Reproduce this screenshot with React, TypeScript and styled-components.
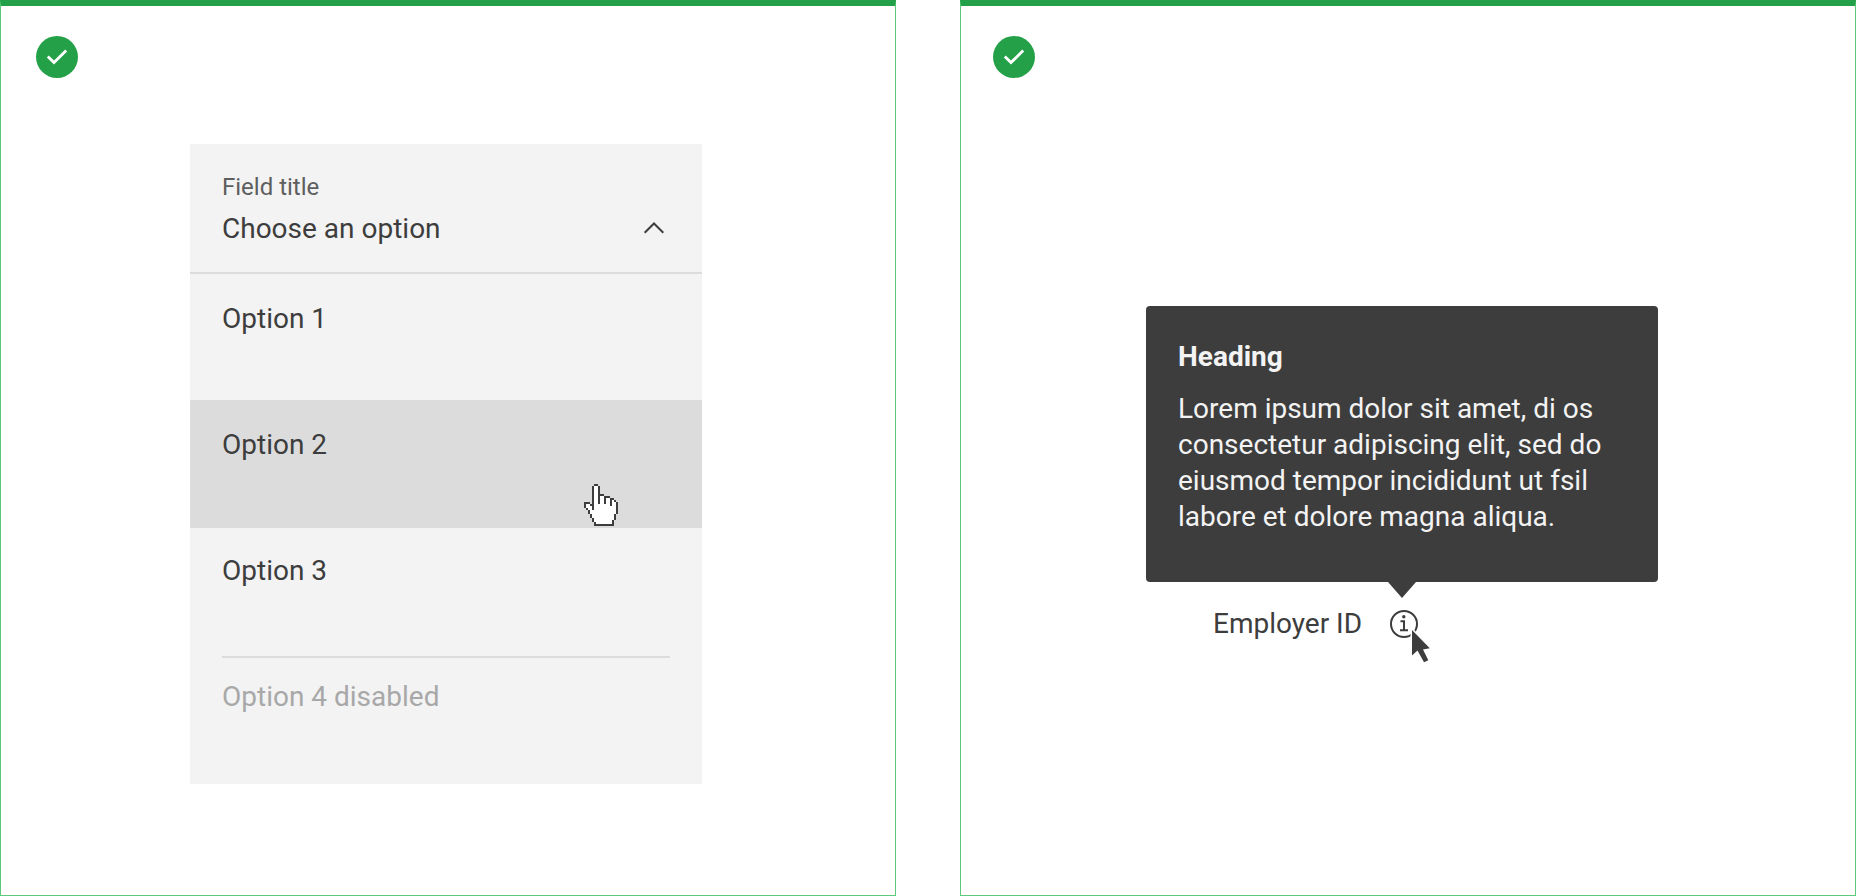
import React from 'react';
import styled, { createGlobalStyle, css } from 'styled-components';

const ink = '#3d3d3d';
const green = '#24a148';

const GlobalStyle = createGlobalStyle`
  *, *::before, *::after { box-sizing: border-box; }
  body { margin: 0; background: #fff; color: ${ink}; }
  body, button { font-family: Roboto, 'Liberation Sans', sans-serif; font-size: 28px; line-height: 36px; }
`;

const Page = styled.main`
  display: grid;
  grid-template-columns: 1fr 1fr;
  gap: 64px;
  min-height: 100vh;
`;

const Panel = styled.section<{ $inset: number }>`
  display: flex;
  flex-direction: column;
  padding: 30px ${(p) => p.$inset}px 111px;
  border: 1px solid #5bcb7b;
  border-top: 6px solid ${green};
`;

const Badge = styled.svg`
  display: block;
  width: 42px;
  height: 42px;
`;

const Example = styled.div<{ $top: number; $shift: number }>`
  display: flex;
  flex-direction: column;
  align-items: center;
  margin-top: ${(p) => p.$top}px;
  padding-right: ${(p) => p.$shift}px;
`;

const Dropdown = styled.div`
  width: 100%;
  max-width: 512px;
  background: #f3f3f3;
`;

const Trigger = styled.button`
  display: flex;
  align-items: flex-end;
  justify-content: space-between;
  width: 100%;
  height: 130px;
  padding: 0 36px 25px 32px;
  border: 0;
  border-bottom: 2px solid #dcdcdc;
  background: none;
  color: inherit;
  text-align: left;
`;

const TriggerText = styled.span`
  display: flex;
  flex-direction: column;
  gap: 8px;
`;

const FieldTitle = styled.span`
  color: #5e5e5e;
  font-size: 24px;
  line-height: 32px;
`;

const Chevron = styled.svg`
  width: 24px;
  height: 24px;
  margin-bottom: 7px;
`;

const Options = styled.ul`
  margin: 0;
  padding: 0 0 6px;
  list-style: none;
`;

const Option = styled.li<{ $hovered?: boolean; $disabled?: boolean }>`
  position: relative;
  height: 126px;
  padding: 27px 32px 0;
  ${(p) => p.$hovered && css`
    background: #dcdcdc;
    box-shadow: 0 2px 0 #dcdcdc;
  `}
  ${(p) => p.$disabled && css`
    padding-top: 4px;
    color: #a8a8a8;
  `}
`;

const OptionLabel = styled.span<{ $divided?: boolean }>`
  display: block;
  ${(p) => p.$divided && css`
    padding-top: 21px;
    border-top: 2px solid #dcdcdc;
  `}
`;

const HandPointer = styled.svg`
  position: absolute;
  right: 84px;
  bottom: 0;
  width: 34px;
  height: 42px;
`;

const Tooltip = styled.div`
  position: relative;
  width: 100%;
  max-width: 512px;
  padding: 33px 32px 47px;
  border-radius: 4px;
  background: ${ink};
  color: #f3f3f3;

  &::after {
    content: '';
    position: absolute;
    top: 100%;
    left: 50%;
    margin-left: -14px;
    border: 14px solid transparent;
    border-top: 16px solid ${ink};
    border-bottom: 0;
  }
`;

const Heading = styled.h2`
  margin: 0 0 16px;
  font-size: 28px;
  line-height: 36px;
  font-weight: 700;
`;

const Body = styled.p`
  margin: 0;
`;

const Field = styled.div`
  display: flex;
  align-items: center;
  gap: 28px;
  width: 100%;
  max-width: 512px;
  margin-top: 24px;
  padding-left: 67px;
`;

const InfoButton = styled.button`
  position: relative;
  display: block;
  width: 28px;
  height: 28px;
  padding: 0;
  border: 0;
  background: none;
`;

const InfoIcon = styled.svg`
  display: block;
  width: 28px;
  height: 28px;
`;

const ArrowPointer = styled.svg`
  position: absolute;
  left: 20px;
  top: 16px;
  width: 24px;
  height: 40px;
`;

// One character per 2px cell: # is the outline, o is the white of the hand.
const hand = [
  '     ##          ',
  '    #oo#         ',
  '    #oo#         ',
  '    #oo#         ',
  '    #oo#         ',
  '    #oo###       ',
  '    #oo#oo###    ',
  '    #oo#oo#oo##  ',
  '    #oo#oo#oo#o# ',
  '### #oo#oo#oo#oo#',
  '#oo##oooooooo#oo#',
  '#ooo#ooooooooooo#',
  ' #oo#ooooooooooo#',
  '  #ooooooooooooo#',
  '  #ooooooooooooo#',
  '   #ooooooooooo# ',
  '   #ooooooooooo# ',
  '    #oooooooooo# ',
  '    #ooooooooo#  ',
  '     #oooooooo#  ',
  '     ##########  ',
];

const cells = (mark: string) =>
  hand
    .flatMap((row, y) => [...row].map((c, x) => (c === mark ? `M${x} ${y}h1v1h-1z` : '')))
    .join('');

function CheckBadge() {
  return (
    <Badge viewBox="0 0 42 42" role="img" aria-label="Do">
      <circle cx="21" cy="21" r="21" fill={green} />
      <path d="M11.8 20.4l6.2 6.2L30.2 14.6" fill="none" stroke="#fff" strokeWidth="2.8" />
    </Badge>
  );
}

export default function App() {
  return (
    <>
      <GlobalStyle />
      <Page>
        <Panel $inset={35}>
          <CheckBadge />
          <Example $top={66} $shift={4}>
            <Dropdown>
              <Trigger type="button" aria-haspopup="listbox" aria-expanded="true" aria-controls="options">
                <TriggerText>
                  <FieldTitle>Field title</FieldTitle>
                  <span>Choose an option</span>
                </TriggerText>
                <Chevron viewBox="0 0 24 24" aria-hidden="true">
                  <path d="M2.7 16.8L12 7.5l9.3 9.3" fill="none" stroke={ink} strokeWidth="2" />
                </Chevron>
              </Trigger>
              <Options id="options" role="listbox" aria-label="Field title">
                <Option role="option"><OptionLabel>Option 1</OptionLabel></Option>
                <Option role="option" $hovered>
                  <OptionLabel>Option 2</OptionLabel>
                  <HandPointer viewBox="0 0 17 21" shapeRendering="crispEdges" aria-hidden="true">
                    <path d={cells('o')} fill="#fff" />
                    <path d={cells('#')} fill={ink} />
                  </HandPointer>
                </Option>
                <Option role="option"><OptionLabel>Option 3</OptionLabel></Option>
                <Option role="option" aria-disabled="true" $disabled>
                  <OptionLabel $divided>Option 4 disabled</OptionLabel>
                </Option>
              </Options>
            </Dropdown>
          </Example>
        </Panel>
        <Panel $inset={32}>
          <CheckBadge />
          <Example $top={228} $shift={12}>
            <Tooltip role="tooltip" id="employer-tip">
              <Heading>Heading</Heading>
              <Body>
                Lorem ipsum dolor sit amet, di os consectetur adipiscing elit, sed do eiusmod tempor
                incididunt ut fsil labore et dolore magna aliqua.
              </Body>
            </Tooltip>
            <Field>
              <span>Employer ID</span>
              <InfoButton type="button" aria-label="About Employer ID" aria-describedby="employer-tip">
                <InfoIcon viewBox="0 0 28 28" aria-hidden="true">
                  <circle cx="14" cy="14" r="13" fill="none" stroke={ink} strokeWidth="2" />
                  <circle cx="13.8" cy="6.8" r="1.7" fill={ink} />
                  <path d="M10.5 11.3h3.5v9M10 20.3h8" fill="none" stroke={ink} strokeWidth="2" />
                </InfoIcon>
                <ArrowPointer viewBox="-2 -4 24 40" aria-hidden="true">
                  <path
                    d="M0 0v25.5l5.5-5L12 32.2l4.3-2L11 19.5l6.8-1.2z"
                    fill={ink}
                    stroke="#fff"
                    strokeWidth="3"
                    paintOrder="stroke"
                  />
                </ArrowPointer>
              </InfoButton>
            </Field>
          </Example>
        </Panel>
      </Page>
    </>
  );
}
